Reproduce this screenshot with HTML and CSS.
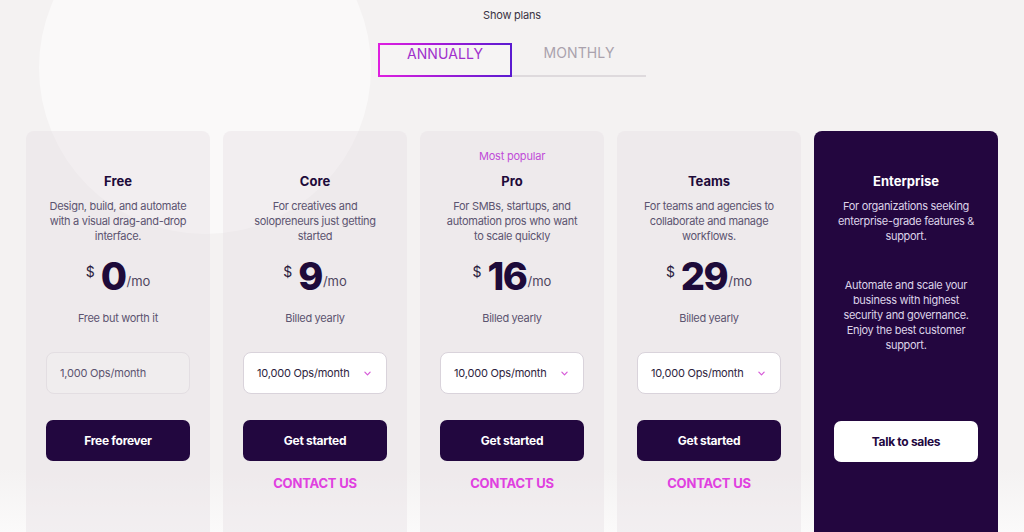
FILE: index.html
```html
<!DOCTYPE html>
<html lang="en">
<head>
<meta charset="utf-8">
<title>Plans</title>
<link rel="stylesheet" href="styles.css">
</head>
<body>
<div class="bg-circle"></div>
<main class="page">
  <p class="show">Show plans</p>
  <div class="toggle">
    <button class="tab active">ANNUALLY</button>
    <button class="tab">MONTHLY</button>
  </div>
  <section class="cards">
    <article class="card">
      <div class="tag"></div>
      <h2 class="title">Free</h2>
      <p class="desc">Design, build, and automate with a visual drag-and-drop interface.</p>
      <div class="price"><span class="cur">$</span><span class="num">0</span><span class="per">/mo</span></div>
      <p class="note">Free but worth it</p>
      <div class="select plain">1,000 Ops/month</div>
      <button class="cta">Free forever</button>
    </article>
    <article class="card">
      <div class="tag"></div>
      <h2 class="title">Core</h2>
      <p class="desc">For creatives and solopreneurs just getting started</p>
      <div class="price"><span class="cur">$</span><span class="num">9</span><span class="per">/mo</span></div>
      <p class="note">Billed yearly</p>
      <div class="select">10,000 Ops/month<svg class="chev" viewBox="0 0 8 5" width="7" height="5"><path d="M1 1l3 3 3-3" fill="none" stroke="#d65ad8" stroke-width="1.4" stroke-linecap="round" stroke-linejoin="round"/></svg></div>
      <button class="cta">Get started</button>
      <a class="contact">CONTACT US</a>
    </article>
    <article class="card">
      <div class="tag">Most popular</div>
      <h2 class="title">Pro</h2>
      <p class="desc">For SMBs, startups, and automation pros who want to scale quickly</p>
      <div class="price"><span class="cur">$</span><span class="num">16</span><span class="per">/mo</span></div>
      <p class="note">Billed yearly</p>
      <div class="select">10,000 Ops/month<svg class="chev" viewBox="0 0 8 5" width="7" height="5"><path d="M1 1l3 3 3-3" fill="none" stroke="#d65ad8" stroke-width="1.4" stroke-linecap="round" stroke-linejoin="round"/></svg></div>
      <button class="cta">Get started</button>
      <a class="contact">CONTACT US</a>
    </article>
    <article class="card">
      <div class="tag"></div>
      <h2 class="title">Teams</h2>
      <p class="desc">For teams and agencies to collaborate and manage workflows.</p>
      <div class="price"><span class="cur">$</span><span class="num">29</span><span class="per">/mo</span></div>
      <p class="note">Billed yearly</p>
      <div class="select">10,000 Ops/month<svg class="chev" viewBox="0 0 8 5" width="7" height="5"><path d="M1 1l3 3 3-3" fill="none" stroke="#d65ad8" stroke-width="1.4" stroke-linecap="round" stroke-linejoin="round"/></svg></div>
      <button class="cta">Get started</button>
      <a class="contact">CONTACT US</a>
    </article>
    <article class="card dark">
      <div class="tag"></div>
      <h2 class="title">Enterprise</h2>
      <p class="desc">For organizations seeking enterprise-grade features &amp; support.</p>
      <p class="desc extra">Automate and scale your business with highest security and governance. Enjoy the best customer support.</p>
      <button class="cta light">Talk to sales</button>
    </article>
  </section>
</main>
</body>
</html>
```

FILE: styles.css
```css
* { box-sizing: border-box; }
html, body { margin: 0; height: 100%; }
body {
  font-family: Inter, "Noto Sans", "Liberation Sans", sans-serif;
  background: linear-gradient(to bottom, #f4f2f2 0%, #f4f2f2 88%, #fbfafa 100%);
  overflow: hidden;
  position: relative;
  color: #1e0b3a;
}
.bg-circle {
  position: absolute;
  left: 39px;
  top: -98px;
  width: 332px;
  height: 332px;
  border-radius: 50%;
  background: #faf9f9;
  z-index: 0;
}
.page {
  position: relative;
  z-index: 1;
  display: flex;
  flex-direction: column;
  align-items: center;
}
.show {
  margin: 8px 0 0;
  font-size: 11px;
  line-height: 15px;
  letter-spacing: -0.2px;
  color: #3a3344;
}
.toggle {
  margin-top: 20px;
  display: flex;
  border-bottom: 2px solid #dedadd;
  height: 34px;
  width: 268px;
}
.tab {
  width: 134px;
  height: 32px;
  border: none;
  background: transparent;
  font-family: inherit;
  font-size: 14px;
  letter-spacing: 0.1px;
  color: #aaa2ad;
  padding: 0 0 14px;
}
.tab.active {
  color: #a030cc;
  border: 2px solid transparent;
  background: linear-gradient(#f6f4f4, #f6f4f4) padding-box, linear-gradient(90deg, #e01ee0, #5a1ad0) border-box;
  padding: 0 0 14px;
  height: 34px;
  margin-bottom: -1px;
}
.cards {
  margin-top: 54px;
  display: flex;
  gap: 13px;
}
.card {
  width: 184px;
  height: 420px;
  border-radius: 8px;
  background: rgba(228, 220, 226, 0.38);
  padding: 17px 20px 0;
  display: flex;
  flex-direction: column;
  align-items: center;
  text-align: center;
}
.card.dark { background: #23063f; }
.tag {
  height: 16px;
  font-size: 11px;
  line-height: 16px;
  letter-spacing: -0.2px;
  color: #c04cd8;
}
.title {
  margin: 8px 0 0;
  font-size: 13px;
  line-height: 18px;
  font-weight: 700;
  color: #1e0b3a;
}
.dark .title { color: #fff; }
.desc {
  margin: 9px 2px 0;
  font-size: 11px;
  line-height: 15px;
  letter-spacing: -0.3px;
  color: #5c5470;
}
.dark .desc { color: #ddd3e8; }
.desc.extra { margin-top: 34px; }
.price {
  margin-top: 12px;
  height: 40px;
  display: flex;
  align-items: center;
  justify-content: center;
  color: #1e0b3a;
}
.cur {
  font-size: 14px;
  align-self: flex-start;
  margin-top: 7px;
  margin-right: 6px;
  color: #2a1c40;
}
.num {
  font-size: 38px;
  font-weight: 800;
  letter-spacing: -1.5px;
  line-height: 40px;
}
.per {
  font-size: 13px;
  align-self: flex-end;
  margin-bottom: 7px;
  margin-left: 1px;
  color: #4e4660;
}
.note {
  margin: 15px 0 0;
  font-size: 11px;
  line-height: 15px;
  letter-spacing: -0.3px;
  color: #5c5470;
}
.select {
  margin-top: 26px;
  width: 144px;
  height: 42px;
  border-radius: 8px;
  background: #fff;
  border: 1px solid #d9d3db;
  display: flex;
  align-items: center;
  justify-content: space-between;
  padding: 0 15px 0 13px;
  font-size: 11px;
  letter-spacing: -0.2px;
  color: #2e2440;
}
.select.plain {
  background: rgba(255,255,255,0.15);
  border-color: #e3dee2;
  color: #5c5470;
}
.chev { margin-top: 1px; }
.cta {
  margin-top: 26px;
  width: 144px;
  height: 41px;
  border: none;
  border-radius: 7px;
  background: #22073f;
  color: #fff;
  font-family: inherit;
  font-size: 12px;
  font-weight: 700;
  letter-spacing: -0.3px;
}
.cta.light {
  margin-top: 68px;
  background: #fff;
  color: #22073f;
}
.contact {
  margin-top: 14px;
  font-size: 13px;
  line-height: 16px;
  font-weight: 700;
  color: #e040e0;
  letter-spacing: -0.2px;
}
```
